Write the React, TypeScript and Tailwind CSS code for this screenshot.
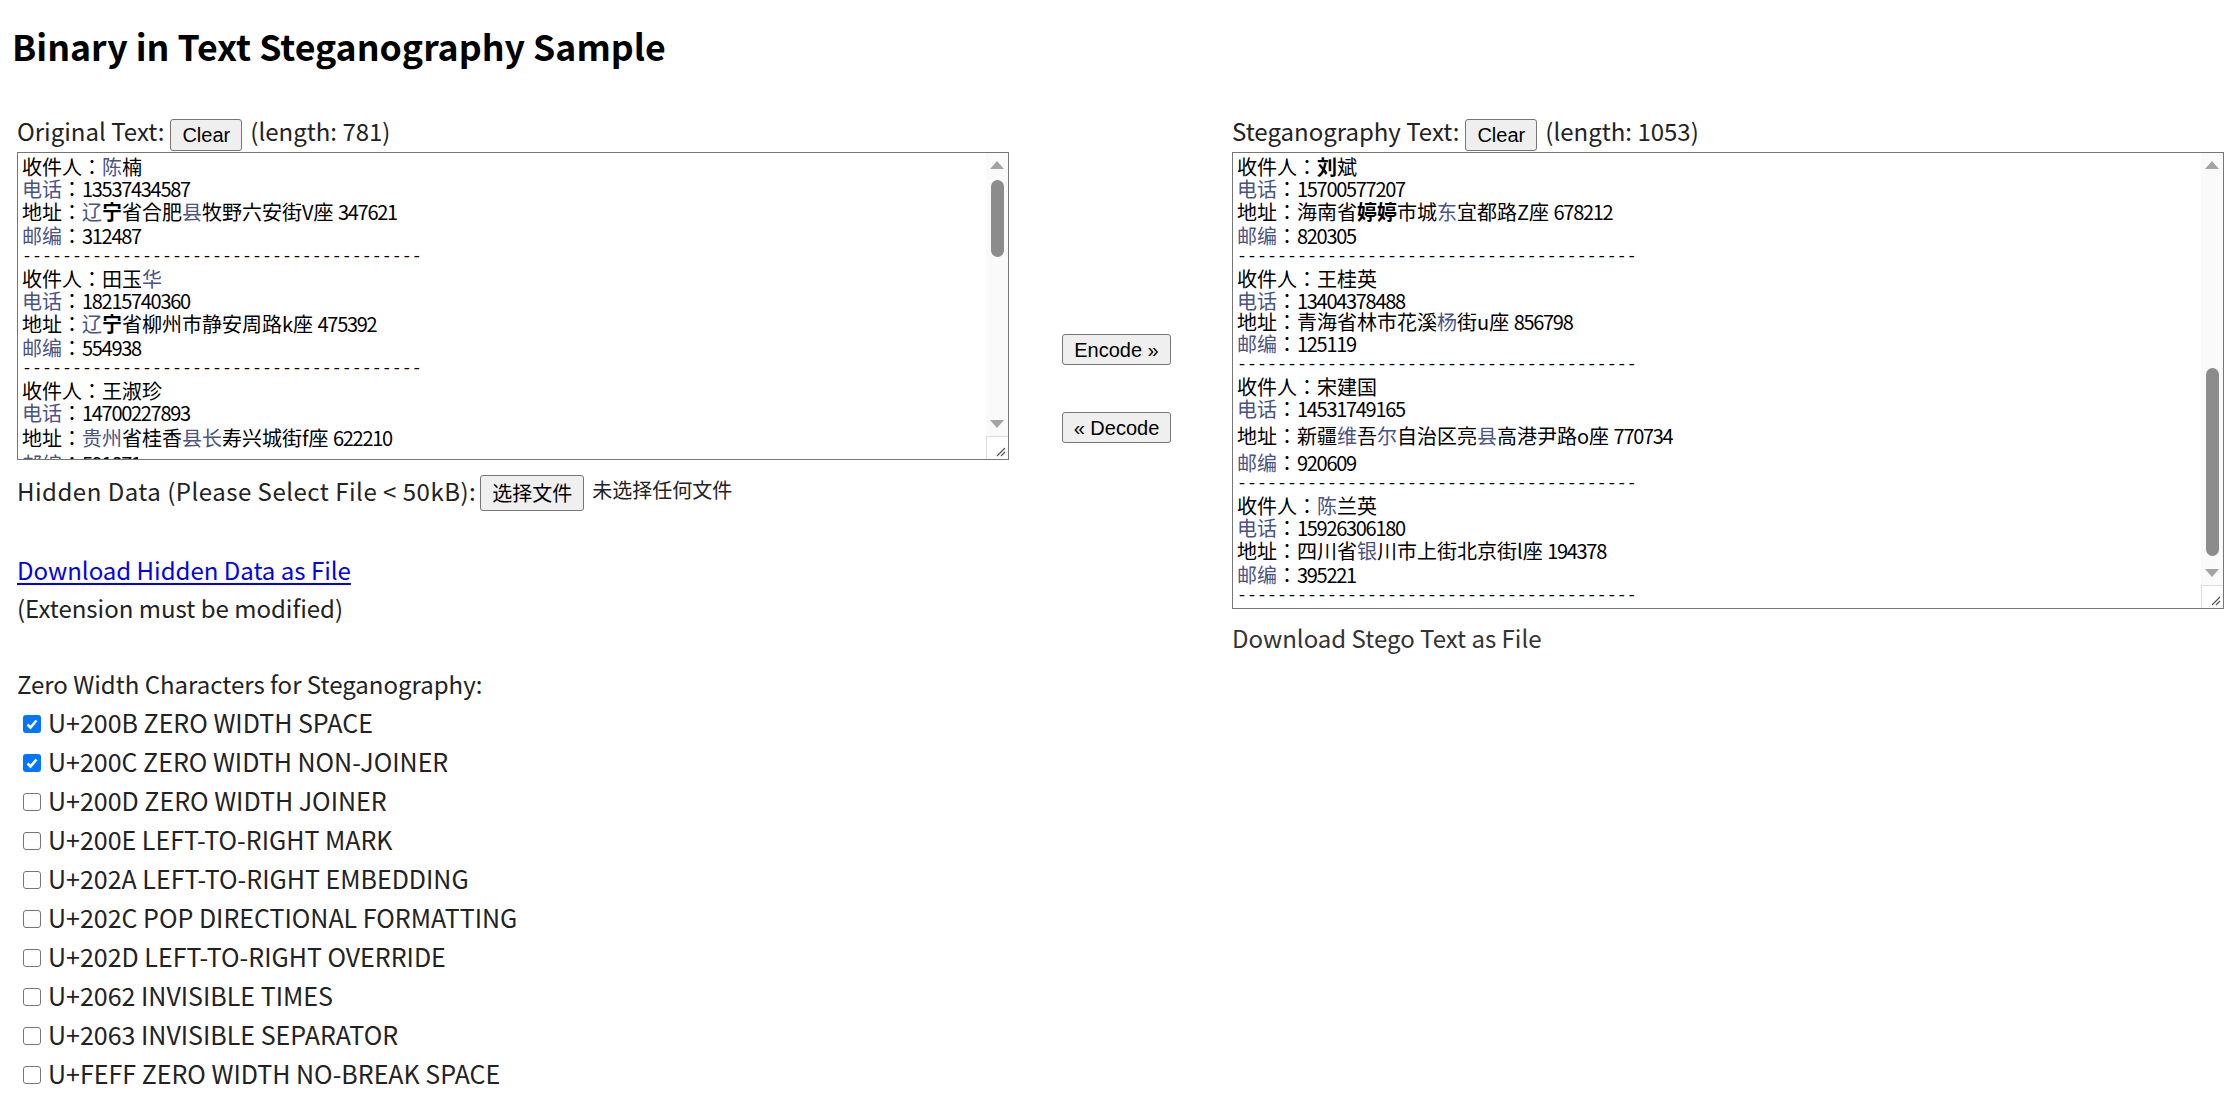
import React from 'react';

type Line = { t: string; h: number; dash?: boolean };

const DASH = '----------------------------------------';

const leading: Record<number, string> = {
  20: 'h-[20px] leading-[20px]',
  22: 'h-[22px] leading-[22px]',
  24: 'h-[24px] leading-[24px]',
  26: 'h-[26px] leading-[26px]',
  30: 'h-[30px] leading-[30px]',
  33: 'h-[33px] leading-[33px]',
};

const dash: Line = { t: DASH, h: 20, dash: true };

// markup: *bold*  ~tinted~ (the fallback glyphs render bold / colour-fringed)
const originalLines: Line[] = [
  { t: '收件人：~陈~楠', h: 24 },
  { t: '~电话~：13537434587', h: 20 },
  { t: '地址：~辽~*宁*省合肥~县~牧野六安街V座 347621', h: 26 },
  { t: '~邮编~：312487', h: 22 },
  dash,
  { t: '收件人：田玉~华~', h: 24 },
  { t: '~电话~：18215740360', h: 20 },
  { t: '地址：~辽~*宁*省柳州市静安周路k座 475392', h: 26 },
  { t: '~邮编~：554938', h: 22 },
  dash,
  { t: '收件人：王淑珍', h: 24 },
  { t: '~电话~：14700227893', h: 20 },
  { t: '地址：~贵州~省桂香~县长~寿兴城街f座 622210', h: 30 },
  { t: '~邮编~：591871', h: 22 },
];

const stegoLines: Line[] = [
  { t: '收件人：*刘*斌', h: 24 },
  { t: '~电话~：15700577207', h: 20 },
  { t: '地址：海南省*婷婷*市城~东~宜都路Z座 678212', h: 26 },
  { t: '~邮编~：820305', h: 22 },
  dash,
  { t: '收件人：王桂英', h: 24 },
  { t: '~电话~：13404378488', h: 20 },
  { t: '地址：青海省林市花溪~杨~街u座 856798', h: 22 },
  { t: '~邮编~：125119', h: 22 },
  dash,
  { t: '收件人：宋建国', h: 24 },
  { t: '~电话~：14531749165', h: 20 },
  { t: '地址：新疆~维~吾~尔~自治区亮~县~高港尹路o座 770734', h: 33 },
  { t: '~邮编~：920609', h: 22 },
  dash,
  { t: '收件人：~陈~兰英', h: 24 },
  { t: '~电话~：15926306180', h: 20 },
  { t: '地址：四川省~银~川市上街北京街l座 194378', h: 26 },
  { t: '~邮编~：395221', h: 22 },
  dash,
];

const zeroWidth = [
  { label: 'U+200B ZERO WIDTH SPACE', on: true },
  { label: 'U+200C ZERO WIDTH NON-JOINER', on: true },
  { label: 'U+200D ZERO WIDTH JOINER', on: false },
  { label: 'U+200E LEFT-TO-RIGHT MARK', on: false },
  { label: 'U+202A LEFT-TO-RIGHT EMBEDDING', on: false },
  { label: 'U+202C POP DIRECTIONAL FORMATTING', on: false },
  { label: 'U+202D LEFT-TO-RIGHT OVERRIDE', on: false },
  { label: 'U+2062 INVISIBLE TIMES', on: false },
  { label: 'U+2063 INVISIBLE SEPARATOR', on: false },
  { label: 'U+FEFF ZERO WIDTH NO-BREAK SPACE', on: false },
];

type Seg = { s: string; bold: boolean; tint: boolean };

function parse(t: string): Seg[] {
  const out: Seg[] = [];
  let bold = false;
  let tint = false;
  let cur = '';
  for (const ch of t) {
    if (ch === '*' || ch === '~') {
      if (cur) out.push({ s: cur, bold, tint });
      cur = '';
      if (ch === '*') bold = !bold;
      else tint = !tint;
    } else {
      cur += ch;
    }
  }
  if (cur) out.push({ s: cur, bold, tint });
  return out;
}

function withDigits(s: string) {
  return s.split(/(\d+)/).map((p, i) =>
    /^\d+$/.test(p) ? (
      <span key={i} className="tracking-[-1.3px]">
        {p}
      </span>
    ) : (
      p
    ),
  );
}

function TextLine({ line }: { line: Line }) {
  if (line.dash) {
    return (
      <div className={`${leading[line.h]} font-['Liberation_Mono',monospace] text-[16.67px] whitespace-pre`}>
        {line.t}
      </div>
    );
  }
  return (
    <div className={`${leading[line.h]} whitespace-pre`}>
      {parse(line.t).map((seg, i) => (
        <span
          key={i}
          className={`${seg.bold ? 'font-bold' : ''} ${seg.tint ? 'text-[#4a5382]' : ''}`}
        >
          {withDigits(seg.s)}
        </span>
      ))}
    </div>
  );
}

function Arrow({ up }: { up?: boolean }) {
  return (
    <svg width="14" height="8" viewBox="0 0 14 8">
      <path d={up ? 'M0 8 L7 0 L14 8 Z' : 'M0 0 L7 8 L14 0 Z'} fill="#a3a3a3" />
    </svg>
  );
}

function TextBox({
  lines,
  height,
  thumbTop,
  thumbHeight,
}: {
  lines: Line[];
  height: string;
  thumbTop: number;
  thumbHeight: number;
}) {
  return (
    <div className={`flex w-[992px] ${height} border border-[#767676] bg-white`}>
      <div className="flex-1 overflow-hidden pl-[4px] pt-[2px] font-['Noto_Sans_CJK_JP',sans-serif] text-[20px] text-black">
        {lines.map((l, i) => (
          <TextLine key={i} line={l} />
        ))}
      </div>
      <div className="flex w-[22px] flex-col bg-[#fafafa]">
        <div className="flex h-[24px] items-center justify-center">
          <Arrow up />
        </div>
        <div className="flex-1">
          <div
            className="mx-auto w-[13px] rounded-full bg-[#8c8c8c]"
            style={{ marginTop: thumbTop, height: thumbHeight }}
          />
        </div>
        <div className="flex h-[24px] items-center justify-center">
          <Arrow />
        </div>
        <div className="relative h-[23px] border-l border-t border-[#dcdcdc] bg-white">
          <svg className="absolute bottom-[2px] right-[2px]" width="10" height="10" viewBox="0 0 10 10">
            <path d="M9 1 L1 9 M9 5 L5 9" stroke="#555" strokeWidth="1.2" />
          </svg>
        </div>
      </div>
    </div>
  );
}

function Btn({ children, className = '' }: { children: React.ReactNode; className?: string }) {
  return (
    <div
      className={`flex items-center justify-center rounded-[3px] border border-[#767676] bg-[#efefef] font-['Liberation_Sans',sans-serif] text-[20px] text-black ${className}`}
    >
      {children}
    </div>
  );
}

function LabelRow({ label, length }: { label: string; length: number }) {
  return (
    <div className="flex h-[40px] items-start">
      <span className="leading-[37px]">{label}</span>
      <Btn className="ml-[6px] mt-[7px] h-[32px] w-[72px]">Clear</Btn>
      <span className="ml-[8px] leading-[37px]">(length: {length})</span>
    </div>
  );
}

function Check({ on }: { on: boolean }) {
  if (on) {
    return (
      <div className="flex h-[18px] w-[18px] items-center justify-center rounded-[3px] bg-[#0075ff]">
        <svg width="14" height="14" viewBox="0 0 14 14">
          <path d="M2.5 7.5 L5.5 10.5 L11.5 3.5" fill="none" stroke="white" strokeWidth="2.6" />
        </svg>
      </div>
    );
  }
  return <div className="h-[18px] w-[18px] rounded-[3px] border-[1.5px] border-[#767676] bg-white" />;
}

export default function App() {
  return (
    <div className="h-[1100px] w-[2232px] overflow-hidden bg-white pl-[12px] font-['Noto_Sans_CJK_JP',sans-serif] text-[24px] text-[#222]">
      <div className="mt-[20px] h-[52px] text-[35.7px] font-bold leading-[52px] text-black">
        Binary in Text Steganography Sample
      </div>

      <div className="mt-[40px] flex pl-[5px]">
        <div className="flex w-[992px] shrink-0 flex-col">
          <LabelRow label="Original Text:" length={781} />
          <TextBox lines={originalLines} height="h-[308px]" thumbTop={3} thumbHeight={77} />

          <div className="mt-[13px] flex h-[39px] items-start">
            <span className="leading-[35px] tracking-[0.5px]">Hidden Data (Please Select File &lt; 50kB):</span>
            <div className="ml-[4px] mt-[2px] flex h-[36px] w-[104px] items-center justify-center rounded-[3px] border border-[#767676] bg-[#efefef] text-[20px] text-black">
              选择文件
            </div>
            <span className="ml-[8px] text-[20px] leading-[33px]">未选择任何文件</span>
          </div>

          <div className="h-[38.5px]" />
          <div className="leading-[38px]">
            <a className="text-[#0000ee] underline underline-offset-[3px]">Download Hidden Data as File</a>
          </div>
          <div className="leading-[38px]">(Extension must be modified)</div>
          <div className="h-[38px]" />
          <div className="leading-[38px]">Zero Width Characters for Steganography:</div>
          {zeroWidth.map((z) => (
            <div key={z.label} className="flex h-[39px] items-start pl-[6px]">
              <div className="mt-[12px]">
                <Check on={z.on} />
              </div>
              <span className="ml-[7px] text-[25px] leading-[39px]">{z.label}</span>
            </div>
          ))}
        </div>

        <div className="flex w-[223px] shrink-0 flex-col pl-[53px] pt-[222px]">
          <Btn className="h-[31px] w-[109px]">Encode »</Btn>
          <Btn className="mt-[47px] h-[31px] w-[109px]">« Decode</Btn>
        </div>

        <div className="flex w-[992px] shrink-0 flex-col">
          <LabelRow label="Steganography Text:" length={1053} />
          <TextBox lines={stegoLines} height="h-[457px]" thumbTop={191} thumbHeight={188} />
          <div className="mt-[18px] leading-[22px] text-[#333]">Download Stego Text as File</div>
        </div>
      </div>
    </div>
  );
}
